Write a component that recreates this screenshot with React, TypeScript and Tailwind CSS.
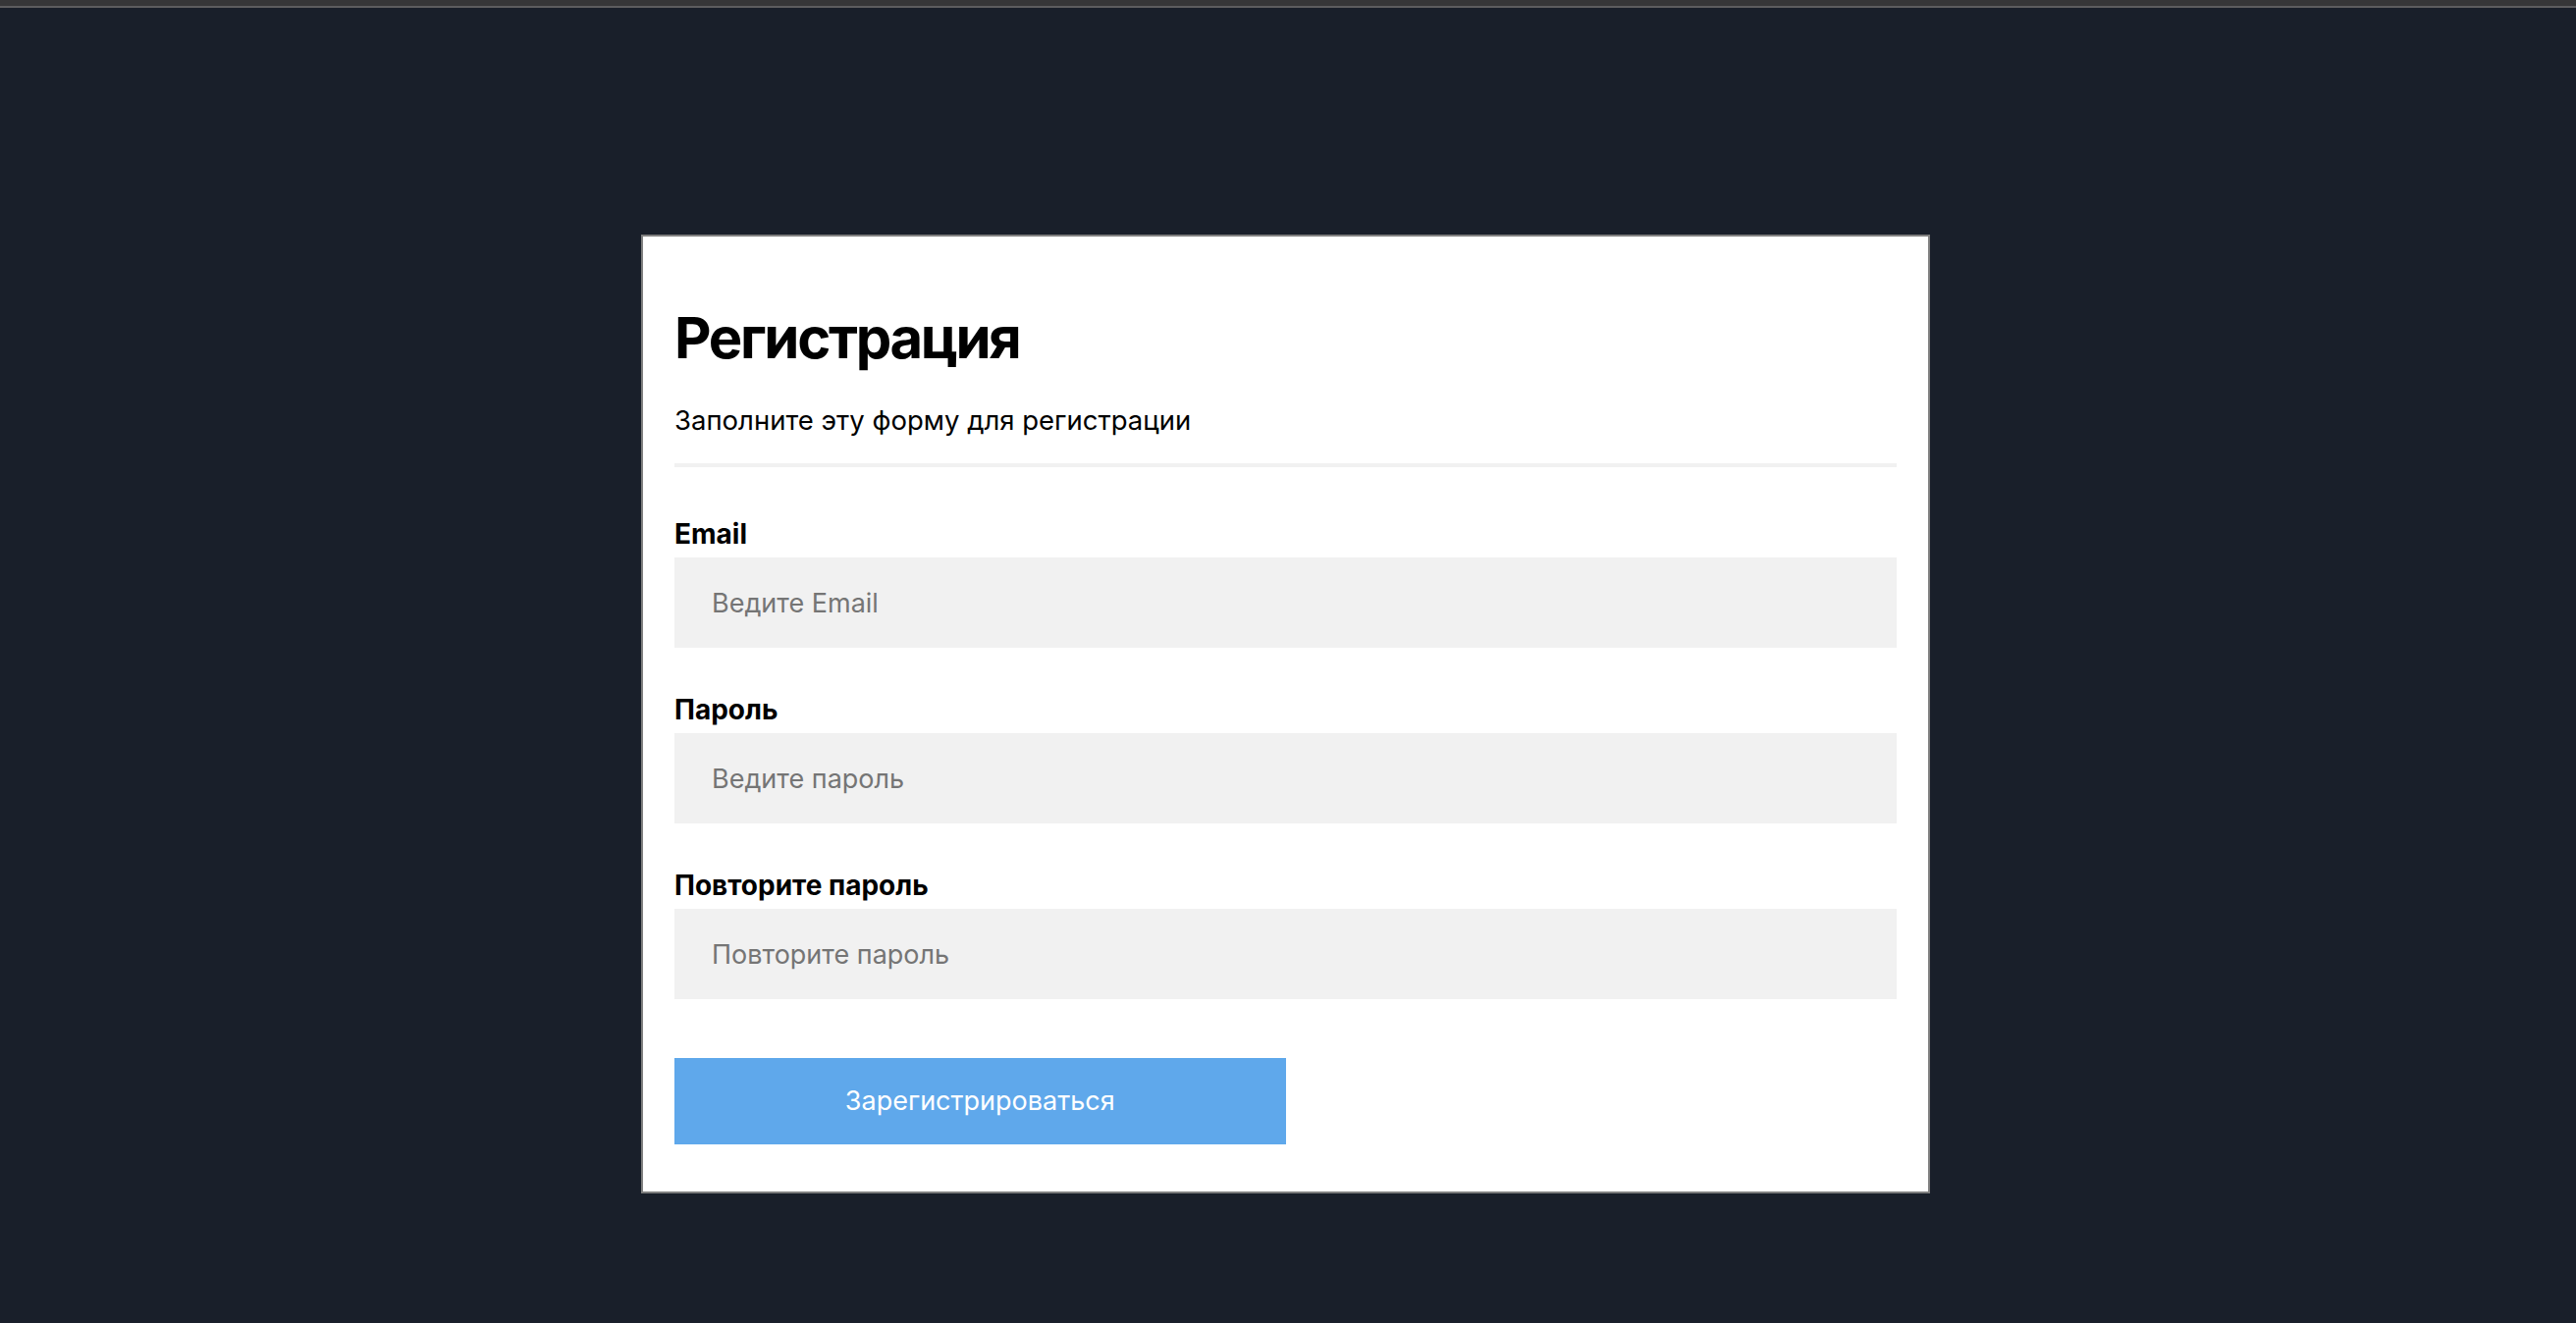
import { useState } from "react";

function Field({ label, placeholder, type, value, onChange }: {
  label: string;
  placeholder: string;
  type: string;
  value: string;
  onChange: (v: string) => void;
}) {
  return (
    <div className="flex flex-col">
      <label className="text-[28px] leading-[32px] font-bold text-black">{label}</label>
      <input
        type={type}
        value={value}
        onChange={(e) => onChange(e.target.value)}
        placeholder={placeholder}
        className="mt-2 h-[92px] w-full bg-[#f1f1f1] px-[38px] text-[27px] text-black outline-none placeholder:text-[#757575]"
      />
    </div>
  );
}

export default function App() {
  const [email, setEmail] = useState("");
  const [password, setPassword] = useState("");
  const [repeat, setRepeat] = useState("");

  return (
    <div className="min-h-[1348px] bg-[#191f2a] font-['Inter','Liberation_Sans',sans-serif]">
      {/* window chrome */}
      <div className="h-[6px] bg-[#363638]" />
      <div className="h-[2px] bg-[#5d5d5f]" />

      <div className="flex justify-center pr-[5px] pt-[231px]">
        <form
          onSubmit={(e) => e.preventDefault()}
          className="w-[1313px] border-2 border-[#7f7f7f] bg-white px-8 pt-[68px] pb-12"
        >
          <h1 className="text-[58px] leading-[70px] font-bold tracking-[-0.04em] text-black">Регистрация</h1>
          <p className="mt-[33px] text-[27.5px] leading-[32px] text-black">Заполните эту форму для регистрации</p>
          <div className="mt-[28px] h-1 bg-[#f1f1f1]" />

          <div className="mt-[52px] flex flex-col gap-[47px]">
            <Field label="Email" placeholder="Ведите Email" type="email" value={email} onChange={setEmail} />
            <Field label="Пароль" placeholder="Ведите пароль" type="password" value={password} onChange={setPassword} />
            <Field label="Повторите пароль" placeholder="Повторите пароль" type="password" value={repeat} onChange={setRepeat} />
          </div>

          <button
            type="submit"
            className="mt-[60px] h-[88px] w-1/2 bg-[#5fa8eb] text-[27px] text-white"
          >
            Зарегистрироваться
          </button>
        </form>
      </div>
    </div>
  );
}
